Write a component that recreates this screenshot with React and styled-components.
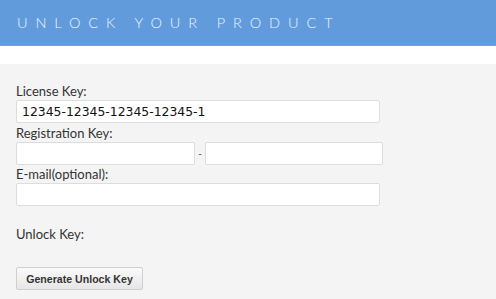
import React from "react";
import styled, { createGlobalStyle } from "styled-components";

const GlobalStyle = createGlobalStyle`
  html, body {
    margin: 0;
    padding: 0;
    background: #f4f4f4;
    overflow: hidden;
  }
  * { box-sizing: border-box; }
`;

const Header = styled.div`
  height: 46px;
  background: #619bdb;
  border-bottom: 1px solid #6aa3e0;
  display: flex;
  align-items: center;
  padding-left: 17px;
`;

const Title = styled.h1`
  margin: 0;
  font-family: "Lato", sans-serif;
  font-weight: 300;
  font-size: 14.5px;
  letter-spacing: 7.9px;
  color: #eef4fb;
`;

const Spacer = styled.div`
  height: 18px;
  background: #ffffff;
`;

const Body = styled.div`
  background: #f4f4f4;
  padding: 20px 16px 0;
`;

const Label = styled.div`
  font-family: "Lato", sans-serif;
  font-size: 13px;
  color: #333;
  line-height: 15px;
  margin-bottom: 1px;
`;

const Input = styled.input`
  display: block;
  width: ${(p) => p.$w}px;
  height: 23px;
  border: 1px solid #dddddd;
  border-radius: 2px;
  background: #fff;
  padding: 0 5px;
  font-family: "DejaVu Sans", sans-serif;
  font-size: 12.4px;
  color: #111;
  margin: 0;
  outline: none;
`;

const Row = styled.div`
  display: flex;
  align-items: center;
  gap: 3px;
`;

const Dash = styled.span`
  font-family: "Lato", sans-serif;
  font-size: 11px;
  color: #666;
`;

const Field = styled.div`
  margin-bottom: ${(p) => p.$gap ?? 3}px;
`;

const UnlockLabel = styled(Label)`
  margin-top: 21px;
`;

const Button = styled.button`
  display: block;
  margin-top: 25px;
  height: 23px;
  padding: 0;
  border: 1px solid #cfcfcf;
  border-radius: 2px;
  background: linear-gradient(#fafafa, #e6e6e6);
  font-family: "Liberation Sans", Arial, sans-serif;
  font-weight: 700;
  font-size: 10.6px;
  color: #333;
  width: 127px;
  white-space: nowrap;
`;

export default function App() {
  return (
    <>
      <GlobalStyle />
      <Header>
        <Title>UNLOCK YOUR PRODUCT</Title>
      </Header>
      <Spacer />
      <Body>
        <Field>
          <Label>License Key:</Label>
          <Input $w={364} defaultValue="12345-12345-12345-12345-1" />
        </Field>
        <Field $gap={2}>
          <Label>Registration Key:</Label>
          <Row>
            <Input $w={179} />
            <Dash>-</Dash>
            <Input $w={178} />
          </Row>
        </Field>
        <Field>
          <Label>E-mail(optional):</Label>
          <Input $w={364} />
        </Field>
        <UnlockLabel>Unlock Key:</UnlockLabel>
        <Button>Generate Unlock Key</Button>
      </Body>
    </>
  );
}
